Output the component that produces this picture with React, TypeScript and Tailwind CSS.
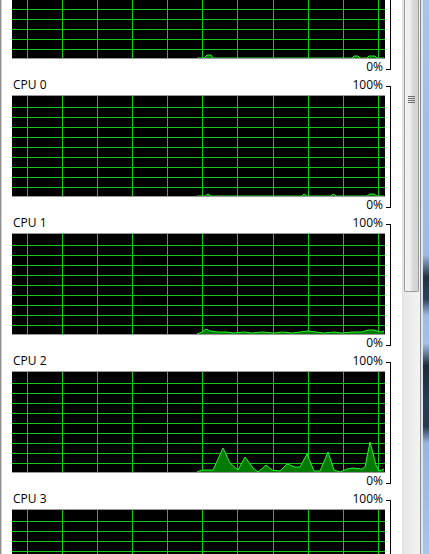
import React from 'react';

type Pt = [number, number];

const VLINES = [15, 50, 85, 120, 155, 190, 225, 261, 296, 331, 366];
const HLINES = [11, 21, 31, 41, 51, 61, 71, 81, 91];

const totalData: Pt[] = [[185, 100], [192, 100], [195, 97], [199, 97], [201, 100], [340, 100], [342, 98], [346, 98], [348, 100], [355, 100], [357, 98], [363, 98], [365, 100], [372, 100]];
const cpu0Data: Pt[] = [[185, 100], [193, 100], [196, 98], [199, 100], [290, 100], [292, 98], [295, 100], [319, 100], [321, 98], [324, 100], [355, 100], [358, 98], [362, 98], [365, 100], [372, 100]];
const cpu1Data: Pt[] = [[185, 100], [190, 98], [194, 95], [198, 97], [206, 98], [214, 98], [222, 99], [232, 98], [240, 99], [250, 98], [262, 99], [270, 98], [280, 99], [288, 98], [296, 97], [304, 98], [312, 99], [322, 98], [330, 99], [340, 98], [350, 98], [356, 96], [362, 96], [368, 98], [372, 97]];
const cpu2Data: Pt[] = [[185, 100], [190, 98], [201, 98], [211, 76], [218, 91], [226, 98], [233, 85], [241, 96], [246, 100], [254, 93], [260, 98], [268, 99], [275, 92], [283, 95], [288, 95], [295, 82], [302, 99], [308, 99], [316, 80], [322, 98], [328, 100], [335, 97], [341, 96], [350, 97], [353, 95], [358, 70], [364, 93], [367, 99], [372, 97]];
const cpu3Data: Pt[] = [];

function Graph({ data }: { data: Pt[] }) {
  const line = data.map(p => p.join(',')).join(' ');
  const fill = data.length ? `${data[0][0]},100 ${line} ${data[data.length - 1][0]},100` : '';
  return (
    <div className="w-[373px] h-[102px] shrink-0 bg-black border-t border-b border-[#9a9a9a]">
      <svg width="373" height="100" className="block">
        <g shapeRendering="crispEdges">
          {HLINES.map(y => (
            <rect key={'h' + y} x="0" y={y} width="373" height="1" fill="#14c814" />
          ))}
          {VLINES.map(x => (
            <rect key={'v' + x} x={x} y="0" width="1" height="100" fill="#14c814" />
          ))}
        </g>
        {data.length > 0 && (
          <>
            <polygon points={fill} fill="#007a00" />
            <polyline points={line} fill="none" stroke="#2bf02b" strokeWidth="1" />
          </>
        )}
      </svg>
    </div>
  );
}

// one block: "CPU n / 100%" row, the graph, then the "0%" row, with the bracket on the right
function CpuSection({ label, data, head = true, foot = true }: { label: string; data: Pt[]; head?: boolean; foot?: boolean }) {
  return (
    <div className="flex shrink-0 h-[138px]">
      <div className="flex flex-col w-[373px]">
        <div className="h-[18px] shrink-0 flex justify-between pl-[1px] pr-[2px] text-[12px] leading-[16px] text-black">
          {head && <span>{label}</span>}
          {head && <span>100%</span>}
        </div>
        <Graph data={data} />
        <div className="h-[18px] shrink-0 flex justify-end pr-[2px] text-[12px] leading-[16px] text-black">
          {foot && <span>0%</span>}
        </div>
      </div>
      <div className="ml-[1px] mt-[9px] w-[5px] h-[122px] border-t border-b border-r border-black" />
    </div>
  );
}

export default function App() {
  return (
    <div className="w-[429px] h-[554px] overflow-hidden flex bg-white" style={{ fontFamily: '"Open Sans", "Noto Sans", sans-serif' }}>
      <div className="w-px bg-[#8e8e8e]" />
      <div className="w-px bg-[#cfcfcf]" />
      <div className="w-[400px] pl-[10px] overflow-hidden">
        <div className="-mt-[61px] flex flex-col">
          <CpuSection label="Total" data={totalData} head={false} />
          <CpuSection label="CPU 0" data={cpu0Data} />
          <CpuSection label="CPU 1" data={cpu1Data} />
          <CpuSection label="CPU 2" data={cpu2Data} />
          <CpuSection label="CPU 3" data={cpu3Data} foot={false} />
        </div>
      </div>

      {/* scrollbar */}
      <div className="w-[18px] border-l border-[#e3e3e3] bg-[linear-gradient(to_right,#e6e6e6,#f3f3f3)]">
        <div className="ml-[1px] w-[15px] h-[292px] border border-t-0 border-[#9b9b9b] rounded-b-[2px] bg-[linear-gradient(to_right,#f4f4f4,#ececec_45%,#dadada_55%,#d2d2d2)] flex flex-col items-center pt-[96px] gap-[1px]">
          <div className="w-[7px] h-px bg-[#6e6e6e]" />
          <div className="w-[7px] h-px bg-[#6e6e6e]" />
          <div className="w-[7px] h-px bg-[#6e6e6e]" />
          <div className="w-[7px] h-px bg-[#6e6e6e]" />
        </div>
      </div>

      {/* window frame */}
      <div className="flex-1 flex border-l border-[#8a8a8a]">
        <div className="w-[2px] bg-[#dbe7f5]" />
        <div className="flex-1 bg-[linear-gradient(to_bottom,#a8c4e6_0%,#9dbbe2_46%,#24313d_50%,#2e4256_54%,#9fbde3_57%,#a4c0e4_62%,#1e2a35_66%,#2a3c4e_72%,#2b3a48_77%,#98b6de_80%,#a9c5e8_100%)]" />
      </div>
    </div>
  );
}
